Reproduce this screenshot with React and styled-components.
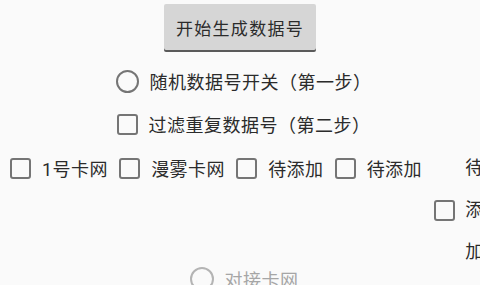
import styled, { createGlobalStyle } from "styled-components";

const GlobalStyle = createGlobalStyle`
	html, body {
		margin: 0;
		padding: 0;
		background: #fafafa;
		overflow: hidden;
	}
	body {
		font-family: "Roboto", "Noto Sans CJK SC", sans-serif;
		color: #2b2b2b;
	}
`;

const Screen = styled.div`
	width: 480px;
	display: flex;
	flex-direction: column;
	align-items: center;
	padding-top: 4px;
	box-sizing: border-box;
	overflow: hidden;
`;

const GenerateButton = styled.button`
	width: 152px;
	height: 46px;
	flex-shrink: 0;
	border: none;
	border-radius: 2px;
	background: #d6d6d6;
	box-shadow: 0 2px 0 #5a5a5a;
	font-family: "Roboto", "Noto Sans CJK SC", sans-serif;
	font-size: 17px;
	letter-spacing: 1.3px;
	color: #2b2b2b;
	padding: 0;
	cursor: pointer;
`;

const Row = styled.div`
	display: flex;
	align-items: center;
	justify-content: center;
	flex-shrink: 0;
	margin-top: ${(p) => p.$top || 0}px;
	height: ${(p) => p.$height || 32}px;
	padding-left: ${(p) => p.$pad || 0}px;
`;

const Option = styled.label`
	display: flex;
	align-items: center;
	flex-shrink: 0;
	margin-right: ${(p) => p.$gap || 0}px;
	color: ${(p) => (p.$disabled ? "#a6a6a6" : "#2b2b2b")};
`;

const Box = styled.span`
	display: inline-block;
	width: 21px;
	height: 21px;
	border: 2.5px solid #757575;
	border-radius: 3px;
	box-sizing: border-box;
	flex-shrink: 0;
`;

const Circle = styled.span`
	display: inline-block;
	width: ${(p) => p.$size || 23}px;
	height: ${(p) => p.$size || 23}px;
	border: 2.5px solid ${(p) => (p.$disabled ? "#b4b4b4" : "#757575")};
	border-radius: 50%;
	box-sizing: border-box;
	flex-shrink: 0;
`;

const Label = styled.span`
	margin-left: 11px;
	font-size: 18px;
	white-space: nowrap;
	letter-spacing: 0.5px;
`;

const NarrowLabel = styled.span`
	margin-left: 10px;
	width: 18px;
	font-size: 18px;
	line-height: 42px;
	word-break: break-all;
`;

const TallRow = styled.div`
	align-self: stretch;
	display: flex;
	align-items: flex-start;
	flex-shrink: 0;
	height: 120px;
	margin-top: 7px;
	padding-left: 10px;
`;

const LineItem = styled.div`
	height: 42px;
	display: flex;
	align-items: center;
`;

const Stacked = styled.label`
	display: flex;
	align-items: center;
	flex-shrink: 0;
	margin-left: 1px;
`;

const cards = ["1号卡网", "漫雾卡网", "待添加", "待添加"];

export default function App() {
	return (
		<>
			<GlobalStyle />
			<Screen>
				<GenerateButton>开始生成数据号</GenerateButton>
				<Row $top={15} $pad={7}>
					<Option>
						<Circle />
						<Label>随机数据号开关（第一步）</Label>
					</Option>
				</Row>
				<Row $top={11} $pad={7}>
					<Option>
						<Box />
						<Label>过滤重复数据号（第二步）</Label>
					</Option>
				</Row>
				<TallRow>
					{cards.map((name, i) => (
						<LineItem key={i}>
							<Option $gap={11}>
								<Box />
								<Label>{name}</Label>
							</Option>
						</LineItem>
					))}
					<Stacked>
						<Box />
						<NarrowLabel>待添加</NarrowLabel>
					</Stacked>
				</TallRow>
				<Row $height={24} $pad={8}>
					<Option $disabled>
						<Circle $disabled $size={24} />
						<Label>对接卡网</Label>
					</Option>
				</Row>
			</Screen>
		</>
	);
}
